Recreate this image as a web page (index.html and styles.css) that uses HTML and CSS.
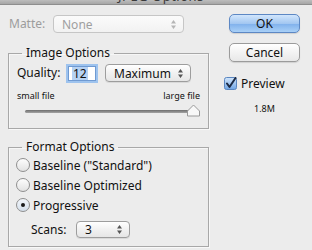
FILE: index.html
```html
<!DOCTYPE html>
<html>
<head>
<meta charset="utf-8">
<link rel="stylesheet" href="styles.css">
</head>
<body>
<div class="titlebar"><span class="title">JPEG Options</span></div>
<div class="dialog">
  <div class="main">
    <div class="row matte">
      <span class="label disabled">Matte:</span>
      <div class="popup is-disabled w-matte">
        <span>None</span>
        <svg class="arrows" width="7" height="11" viewBox="0 0 7 11"><path d="M3.5 1 L6 4.5 L1 4.5 Z M3.5 10 L6 6.5 L1 6.5 Z" fill="#b5b5b5"/></svg>
      </div>
    </div>

    <fieldset class="group image">
      <legend>Image Options</legend>
      <div class="row quality">
        <span class="label">Quality:</span>
        <div class="field"><span class="sel">12</span></div>
        <div class="popup w-max">
          <span>Maximum</span>
          <svg class="arrows" width="7" height="11" viewBox="0 0 7 11"><path d="M3.5 1 L6 4.5 L1 4.5 Z M3.5 10 L6 6.5 L1 6.5 Z" fill="#555"/></svg>
        </div>
      </div>
      <div class="scale"><span>small file</span><span>large file</span></div>
      <div class="slider">
        <div class="track"></div>
        <svg class="thumb" width="15" height="13" viewBox="0 0 15 13"><path d="M1.5 12 L1.5 7 L7.5 1 L13.5 7 L13.5 12 Z" fill="#f8f8f8" stroke="#9a9a9a" stroke-width="1"/></svg>
      </div>
    </fieldset>

    <fieldset class="group format">
      <legend>Format Options</legend>
      <div class="radio"><span class="dot"></span><span>Baseline ("Standard")</span></div>
      <div class="radio"><span class="dot"></span><span>Baseline Optimized</span></div>
      <div class="radio"><span class="dot on"></span><span>Progressive</span></div>
      <div class="row scans">
        <span class="label">Scans:</span>
        <div class="popup w-scans">
          <span>3</span>
          <svg class="arrows" width="7" height="11" viewBox="0 0 7 11"><path d="M3.5 1 L6 4.5 L1 4.5 Z M3.5 10 L6 6.5 L1 6.5 Z" fill="#555"/></svg>
        </div>
      </div>
    </fieldset>
  </div>

  <div class="side">
    <div class="btn default">OK</div>
    <div class="btn">Cancel</div>
    <div class="check">
      <svg class="box" width="13" height="13" viewBox="0 0 13 13">
        <defs><linearGradient id="cb" x1="0" y1="0" x2="0" y2="1"><stop offset="0" stop-color="#d3e6fb"/><stop offset="1" stop-color="#6ea4e4"/></linearGradient></defs>
        <rect x="0.5" y="0.5" width="12" height="12" rx="2" fill="url(#cb)" stroke="#5a86c0"/>
        <path d="M3 6.5 L5.5 10 L11.5 1" fill="none" stroke="#1b2a44" stroke-width="2" stroke-linecap="round" stroke-linejoin="round"/>
      </svg>
      <span>Preview</span>
    </div>
    <div class="size">1.8M</div>
  </div>
</div>
</body>
</html>
```

FILE: styles.css
```css
* { box-sizing: border-box; }
html, body {
  margin: 0;
  padding: 0;
  background: #ececec;
  width: 312px;
  height: 250px;
  overflow: hidden;
}
body {
  font-family: "Noto Sans", "DejaVu Sans", sans-serif;
  font-size: 12px;
  color: #111;
}
.titlebar {
  height: 5px;
  background: linear-gradient(#bdbdbd, #a6a6a6);
  border-bottom: 1px solid #8e8e8e;
  overflow: hidden;
  padding-left: 118px;
}
.title {
  display: block;
  margin-top: -12px;
  font-size: 13px;
  line-height: 16px;
  color: #3a3a3a;
  letter-spacing: 0.5px;
}
.dialog {
  display: flex;
}
.main {
  width: 209px;
  padding-left: 8px;
}
.row {
  display: flex;
  align-items: center;
}
.label { line-height: 16px; }
.disabled { color: #9c9c9c; }

.matte {
  margin-top: 10px;
  height: 18px;
}
.matte .label { margin-left: 1px; width: 44px; }

.popup {
  display: flex;
  align-items: center;
  justify-content: space-between;
  height: 18px;
  border: 1px solid #9d9d9d;
  border-radius: 4px;
  background: linear-gradient(#ffffff, #f1f1f1 50%, #e6e6e6);
  box-shadow: 0 1px 0 rgba(0,0,0,0.08);
  padding: 0 6px 0 8px;
}
.popup.is-disabled {
  border-color: #c6c6c6;
  color: #9f9f9f;
  background: linear-gradient(#fbfbfb, #f2f2f2);
  box-shadow: none;
}
.w-matte { width: 131px; }
.w-max { width: 86px; margin-left: 9px; }
.w-scans { width: 54px; height: 17px; }

.group {
  margin: 0;
  border: 1px solid #a8a8a8;
  box-shadow: 1px 1px 0 #f8f8f8, inset 1px 1px 0 #f6f6f6;
  width: 201px;
  padding: 0 8px;
}
.group legend {
  margin-left: 5px;
  padding: 0 4px;
  line-height: 16px;
  font-size: 12px;
}
.image {
  margin-top: 12px;
  padding-top: 3px;
  padding-bottom: 11px;
}
.quality { height: 18px; }
.quality .label { width: 51px; }
.field {
  width: 28px;
  height: 15px;
  background: #fff;
  border: 1px solid #6f9ad2;
  box-shadow: 0 0 0 2px #9ec3ee;
  padding-left: 3px;
  display: flex;
  align-items: center;
}
.sel {
  background: #b6d2f3;
  line-height: 13px;
  padding: 0 1px;
}
.scale {
  display: flex;
  justify-content: space-between;
  font-size: 9px;
  line-height: 12px;
  margin-top: 8px;
}
.slider {
  display: flex;
  align-items: center;
  height: 13px;
  margin-top: 2px;
  padding-left: 8px;
  margin-right: -1px;
}
.track {
  flex: 1;
  height: 3px;
  border-radius: 2px;
  background: linear-gradient(#6d6d6d, #a5a5a5);
  margin-top: 1px;
}
.thumb {
  margin-left: -6px;
  flex: none;
}

.format {
  margin-top: 10px;
  padding-top: 0;
  padding-bottom: 8px;
}
.radio {
  display: flex;
  align-items: center;
  height: 20px;
}
.dot {
  width: 14px;
  height: 14px;
  border-radius: 50%;
  border: 1px solid #8f8f8f;
  background: linear-gradient(#fdfdfd, #e2e2e2);
  margin-left: -1px;
  margin-right: 3px;
  display: flex;
  align-items: center;
  justify-content: center;
}
.dot.on {
  background: linear-gradient(#f2f6fb, #d4dfeb);
}
.dot.on::after {
  content: "";
  width: 4px;
  height: 4px;
  border-radius: 50%;
  background: #1a1a1a;
}
.scans {
  margin-top: 6px;
  height: 17px;
  padding-left: 14px;
}
.scans .label { width: 45px; }

.side {
  margin-left: 20px;
  width: 71px;
  display: flex;
  flex-direction: column;
}
.btn {
  height: 19px;
  border: 1px solid #9b9b9b;
  border-radius: 5px;
  background: linear-gradient(#ffffff, #f3f3f3 50%, #e8e8e8);
  text-align: center;
  line-height: 17px;
  font-size: 12px;
  box-shadow: 0 1px 1px rgba(0,0,0,0.12);
}
.btn.default {
  margin-top: 9px;
  border-color: #5d88c4;
  background: linear-gradient(#d2e6fc, #a3c7f1 50%, #7fb0ec 51%, #a9d0f7);
}
.btn + .btn { margin-top: 10px; }
.check {
  margin-top: 15px;
  margin-left: -5px;
  display: flex;
  align-items: center;
  height: 13px;
}
.check .box { margin-right: 4px; }
.size {
  margin-top: 13px;
  text-align: center;
  font-size: 9px;
  line-height: 12px;
}
```
